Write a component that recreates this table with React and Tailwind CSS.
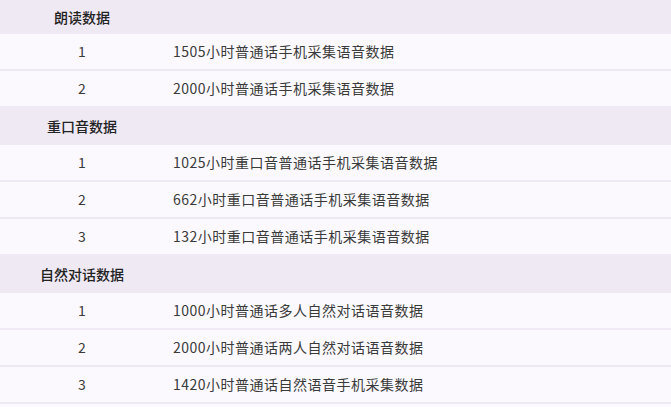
const sections = [
  {
    title: '朗读数据',
    first: true,
    rows: ['1505小时普通话手机采集语音数据', '2000小时普通话手机采集语音数据'],
  },
  {
    title: '重口音数据',
    rows: ['1025小时重口音普通话手机采集语音数据', '662小时重口音普通话手机采集语音数据', '132小时重口音普通话手机采集语音数据'],
  },
  {
    title: '自然对话数据',
    rows: ['1000小时普通话多人自然对话语音数据', '2000小时普通话两人自然对话语音数据', '1420小时普通话自然语音手机采集数据'],
  },
]

export default function App() {
  return (
    <div
      className="w-[671px] h-[407px] overflow-hidden bg-[#efe9f4] text-[14px] text-[#3a3a3a]"
      style={{ fontFamily: '"Noto Sans CJK SC", "Noto Sans", sans-serif' }}
    >
      {sections.map(s => (
        <div key={s.title}>
          <div className={`flex items-center ${s.first ? 'h-[34px]' : 'h-[37px]'}`}>
            <div className="w-[164px] text-center font-medium text-[#222]">{s.title}</div>
          </div>
          {s.rows.map((r, i) => (
            <div key={r} className="flex items-center h-[37px] bg-[#fbf9fd] border-b-2 border-[#efe9f4]">
              <div className="w-[164px] text-center">{i + 1}</div>
              <div className="pl-[9px] tracking-[0.5px]">{r}</div>
            </div>
          ))}
        </div>
      ))}
      <div className="h-[10px] bg-[#fbf9fd]" />
    </div>
  )
}
